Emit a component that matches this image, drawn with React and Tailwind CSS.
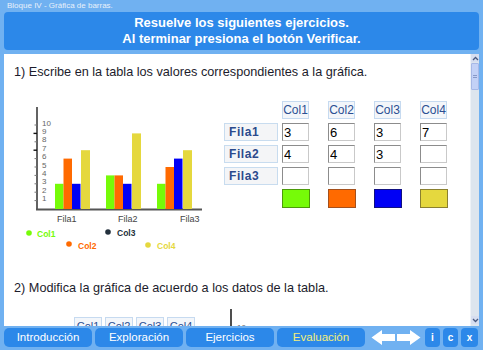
import React from "react";

const rows = [
  { name: "Fila1", values: [3, 6, 3, 7] },
  { name: "Fila2", values: [4, 4, 3, 9] },
  { name: "Fila3", values: [3, 5, 6, 7] },
];

const colors = ["#76fb08", "#ff6a00", "#0000f5", "#e5d83e"];
const swatchBorders = ["#4c9a0a", "#a4501c", "#101080", "#8a8030"];

const table = [
  ["3", "6", "3", "7"],
  ["4", "4", "3", ""],
  ["", "", "", ""],
];

const UNIT = 8.4;
const BASE = 109;

const BarChart = () => {
  const groups = [51, 102, 153];
  return (
    <svg width="216" height="160" viewBox="0 0 216 160" className="shrink-0">
      <line x1="33" y1="7" x2="33" y2="110" stroke="#3c3c3c" strokeWidth="1.6" />
      <line x1="32" y1="109.5" x2="198" y2="109.5" stroke="#555" strokeWidth="2" />
      {Array.from({ length: 10 }, (_, i) => {
        const k = i + 1;
        const y = BASE - k * UNIT;
        const heavy = k === 9 || k === 7;
        return (
          <g key={k}>
            <line
              x1={heavy ? 29.5 : 30.5}
              y1={y}
              x2="33"
              y2={y}
              stroke={heavy ? "#111" : "#777"}
              strokeWidth={heavy ? 1.4 : 1}
            />
            <text x="38" y={y + 0.6} fontSize="8" fill="#666" fontFamily="Liberation Sans, sans-serif">
              {k}
            </text>
          </g>
        );
      })}
      {rows.map((row, gi) =>
        row.values.map((v, bi) => {
          const x = groups[gi] + [0, 8.5, 17, 26][bi];
          const h = v * UNIT;
          return (
            <rect
              key={`${gi}-${bi}`}
              x={x}
              y={BASE - h}
              width={bi === 3 ? 9 : 8.5}
              height={h}
              fill={colors[bi]}
            />
          );
        })
      )}
      {["Fila1", "Fila2", "Fila3"].map((f, i) => (
        <text
          key={f}
          x={[53, 114, 176][i]}
          y="121.5"
          fontSize="9"
          fill="#444"
          fontFamily="Liberation Sans, sans-serif"
        >
          {f}
        </text>
      ))}
      <circle cx="25" cy="133" r="2.8" fill="#76fb08" />
      <text x="33" y="137" fontSize="8.5" fontWeight="bold" fill="#76fb08" fontFamily="Liberation Sans, sans-serif">
        Col1
      </text>
      <circle cx="104" cy="132" r="2.8" fill="#23303c" />
      <text x="113" y="136" fontSize="8.5" fontWeight="bold" fill="#23303c" fontFamily="Liberation Sans, sans-serif">
        Col3
      </text>
      <circle cx="65" cy="144" r="2.8" fill="#ff6a00" />
      <text x="74" y="148.5" fontSize="8.5" fontWeight="bold" fill="#ff6a00" fontFamily="Liberation Sans, sans-serif">
        Col2
      </text>
      <circle cx="144" cy="145" r="2.8" fill="#e5d83e" />
      <text x="153" y="148.5" fontSize="8.5" fontWeight="bold" fill="#e5d83e" fontFamily="Liberation Sans, sans-serif">
        Col4
      </text>
    </svg>
  );
};

const ColHead = ({ label }) => (
  <div className="w-[27px] h-[18px] bg-[#f3f6fa] border border-[#c6daf0] text-[12px] leading-[16px] text-[#2b4f93] text-center">
    {label}
  </div>
);

const Cell = ({ value }) => (
  <input
    readOnly
    value={value}
    className="w-[27px] h-[18px] bg-white border border-t-[#8c8c8c] border-l-[#8c8c8c] border-r-[#c9c9c9] border-b-[#c9c9c9] text-[13px] leading-[16px] text-black px-[1px] outline-none"
  />
);

const DataTable = () => (
  <div className="mt-[1px] ml-[4px] grid grid-cols-[58px_46px_46px_46px_46px] auto-rows-[18px] gap-y-[4px]">
    <div />
    {["Col1", "Col2", "Col3", "Col4"].map((c) => (
      <ColHead key={c} label={c} />
    ))}
    {table.map((r, ri) => (
      <React.Fragment key={ri}>
        <div className="w-[54px] h-[18px] bg-[#f4f5f7] border border-[#c8dcef] pl-[4px] text-[12px] leading-[16px] font-bold tracking-[0.6px] text-[#2b4a8c]">
          {`Fila${ri + 1}`}
        </div>
        {r.map((v, ci) => (
          <Cell key={ci} value={v} />
        ))}
      </React.Fragment>
    ))}
    <div />
    {colors.map((c, i) => (
      <div
        key={c}
        className="w-[28px] h-[19px] border"
        style={{ backgroundColor: c, borderColor: swatchBorders[i] }}
      />
    ))}
  </div>
);

const Scrollbar = () => (
  <div className="w-[9px] h-full bg-[#dde5ee] flex flex-col border-l border-[#eef2f7]">
    <div className="h-[8px] flex items-center justify-center bg-[#d6def0]">
      <svg width="7" height="5" viewBox="0 0 7 5">
        <path d="M1 4 L3.5 1.5 L6 4" fill="none" stroke="#4a5a80" strokeWidth="1.3" />
      </svg>
    </div>
    <div className="h-[27px] mt-[1px] bg-[#c3d1f6] border border-[#a7b8e6] rounded-[1px] flex flex-col items-center justify-center gap-[1px]">
      <div className="w-[4px] h-px bg-[#8798c8]" />
      <div className="w-[4px] h-px bg-[#8798c8]" />
    </div>
    <div className="flex-1" />
    <div className="h-[8px] mb-[2px] flex items-center justify-center bg-[#d6def0]">
      <svg width="7" height="5" viewBox="0 0 7 5">
        <path d="M1 1 L3.5 3.5 L6 1" fill="none" stroke="#4a5a80" strokeWidth="1.3" />
      </svg>
    </div>
  </div>
);

const NavButton = ({ label, active }) => (
  <button
    className={`w-[88px] h-[19px] rounded-[5px] bg-[#2c88e9] text-[11.5px] leading-[19px] ${
      active ? "text-[#f4ef78]" : "text-white"
    }`}
  >
    {label}
  </button>
);

const SmallButton = ({ label, wide }) => (
  <button
    className={`${wide ? "w-[17px]" : "w-[15px]"} h-[19px] rounded-[4px] bg-[#2c88e9] text-white text-[10px] font-bold leading-[19px]`}
  >
    {label}
  </button>
);

const Arrow = ({ dir }) => (
  <svg width="24" height="17" viewBox="0 0 24 17">
    <path
      d={
        dir === "left"
          ? "M0.5 8.5 L11 1 L11 5 L24 5 L24 12 L11 12 L11 16 Z"
          : "M23.5 8.5 L13 1 L13 5 L0 5 L0 12 L13 12 L13 16 Z"
      }
      fill="#ffffff"
    />
  </svg>
);

export default function App() {
  return (
    <div
      className="w-[483px] h-[350px] overflow-hidden bg-[#70b1f1] flex flex-col"
      style={{ fontFamily: '"Liberation Sans", Arial, sans-serif' }}
    >
      <div className="h-[12px] pl-[7px] text-[8px] leading-[11px] text-[#e8f0fa]">
        Bloque IV - Gráfica de barras.
      </div>

      <div className="mx-[4px] h-[38px] rounded-[4px] bg-[#2c88e9] text-white font-bold text-[13px] leading-[16px] flex flex-col items-center justify-center">
        <div>Resuelve los siguientes ejercicios.</div>
        <div>Al terminar presiona el botón Verificar.</div>
      </div>

      <div className="mt-[4px] mx-[4px] h-[272px] flex">
        <div className="w-[466px] h-full bg-white overflow-hidden flex flex-col text-[#1c1c2c]">
          <p className="mt-[11px] ml-[10px] text-[12.7px] leading-[14px] whitespace-nowrap">
            1) Escribe en la tabla los valores correspondientes a la gráfica.
          </p>
          <div className="mt-[21px] flex items-start">
            <BarChart />
            <DataTable />
          </div>
          <p className="mt-[21px] ml-[10px] text-[12.7px] leading-[14px] whitespace-nowrap">
            2) Modifica la gráfica de acuerdo a los datos de la tabla.
          </p>
          <div className="mt-[14px] flex items-start">
            <div className="mt-[8px] ml-[70px] flex gap-[3px]">
              {["Col1", "Col2", "Col3", "Col4"].map((c) => (
                <div
                  key={c}
                  className="w-[28px] h-[18px] bg-[#f3f6fa] border border-[#c6daf0] text-[11px] leading-[16px] text-[#2b4f93] text-center"
                >
                  {c}
                </div>
              ))}
            </div>
            <svg width="40" height="20" viewBox="0 0 40 20" className="ml-[31px]">
              <line x1="5" y1="0" x2="5" y2="20" stroke="#222" strokeWidth="1.6" />
              <text x="11" y="21" fontSize="8" fill="#666" fontFamily="Liberation Sans, sans-serif">
                10
              </text>
            </svg>
          </div>
        </div>
        <Scrollbar />
      </div>

      <div className="h-[24px] pt-[2px] pl-[4px] flex items-start">
        <div className="flex gap-[3px]">
          <NavButton label="Introducción" />
          <NavButton label="Exploración" />
          <NavButton label="Ejercicios" />
          <NavButton label="Evaluación" active />
        </div>
        <div className="ml-[6px] mt-[1px] flex gap-[2px]">
          <Arrow dir="left" />
          <Arrow dir="right" />
        </div>
        <div className="ml-[4px] flex gap-[3px]">
          <SmallButton label="i" />
          <SmallButton label="c" />
          <SmallButton label="x" wide />
        </div>
      </div>
    </div>
  );
}
